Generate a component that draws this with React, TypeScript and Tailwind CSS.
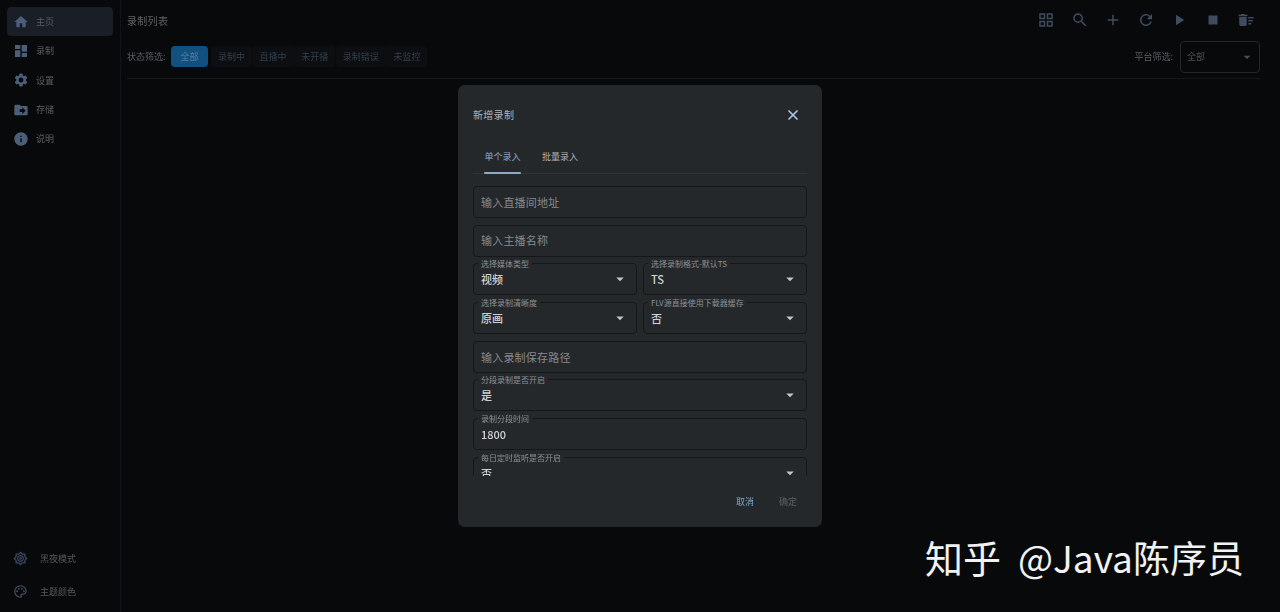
import React from 'react';
import { X } from 'lucide-react';
import {
  MdHome,
  MdDashboard,
  MdSettings,
  MdDriveFileMove,
  MdInfo,
  MdOutlineBrightness7,
  MdOutlinePalette,
  MdOutlineGridView,
  MdSearch,
  MdAdd,
  MdRefresh,
  MdPlayArrow,
  MdStop,
  MdDeleteSweep,
  MdArrowDropDown,
} from 'react-icons/md';

const navItems = [
  { label: '主页', icon: MdHome, active: true },
  { label: '录制', icon: MdDashboard, flip: true },
  { label: '设置', icon: MdSettings },
  { label: '存储', icon: MdDriveFileMove },
  { label: '说明', icon: MdInfo },
];

const filters = ['录制中', '直播中', '未开播', '录制错误', '未监控'];
const toolbar = [MdOutlineGridView, MdSearch, MdAdd, MdRefresh, MdPlayArrow, MdStop, MdDeleteSweep];

const Field: React.FC<{ label?: string; value?: string; placeholder?: string; select?: boolean }> = ({
  label,
  value,
  placeholder,
  select,
}) => {
  return (
    <div className="relative h-8 shrink-0 rounded-[4px] border-[1.5px] border-[#15171a] flex items-center justify-between pl-[7px] pr-2">
      {label && (
        <span className="absolute left-[4px] top-[-5px] bg-[#25282b] px-[3px] text-[8px] leading-[10px] text-[#8d9095] whitespace-nowrap">
          {label}
        </span>
      )}
      {placeholder ? (
        <span className="text-[11px] text-[#85888c] tracking-[0.2px]">{placeholder}</span>
      ) : (
        <span className="text-[11px] font-medium text-[#cfd1d3]">{value}</span>
      )}
      {select && <MdArrowDropDown className="text-[#c4c6c9] ml-auto -mr-[1px]" size={18} />}
    </div>
  );
};

const App: React.FC = () => {
  return (
    <div className="relative h-[612px] w-[1280px] overflow-hidden bg-[#08090b] font-['Noto_Sans_CJK_SC','Noto_Sans',sans-serif]">
      <div className="flex h-full blur-[0.5px]">
        {/* Sidebar */}
        <aside className="w-[121px] shrink-0 border-r border-[#121419] flex flex-col justify-between pt-[7px] pb-[13px] pl-[7px] pr-[7px]">
          <nav className="flex flex-col gap-[0.4px]">
            {navItems.map((item) => (
              <div
                key={item.label}
                className={`h-[29px] rounded-[4px] flex items-center gap-[7px] pl-[6px] ${item.active ? 'bg-[#1a1e27]' : ''}`}
              >
                <item.icon className={`text-[#4c5e79] ${item.flip ? '-scale-y-100' : ''}`} size={16} />
                <span className="text-[9px] text-[#5b5e63]">{item.label}</span>
              </div>
            ))}
          </nav>
          <div className="flex flex-col gap-[18px] pl-[6px]">
            <div className="flex items-center gap-[12px]">
              <MdOutlineBrightness7 className="text-[#3c4a60]" size={15} />
              <span className="text-[9px] text-[#55585c]">黑夜模式</span>
            </div>
            <div className="flex items-center gap-[12px]">
              <MdOutlinePalette className="text-[#3c4a60]" size={15} />
              <span className="text-[9px] text-[#55585c]">主题颜色</span>
            </div>
          </div>
        </aside>

        {/* Main */}
        <main className="flex-1 pl-[6px] pr-[20px]">
          <div className="h-[40px] flex items-center justify-between">
            <h1 className="text-[10px] font-normal text-[#5f6266] tracking-[0.3px]">录制列表</h1>
            <div className="flex items-center gap-[15.3px] pr-[5px]">
              {toolbar.map((Icon, i) => (
                <Icon key={i} className="text-[#3f4c60]" size={18} />
              ))}
            </div>
          </div>
          <div className="h-[39px] flex items-center justify-between border-b border-[#15171b] pb-[6px] pt-[1px]">
            <div className="flex items-center">
              <span className="text-[9px] text-[#5a5d61] w-[44px]">状态筛选:</span>
              <span className="h-[21px] w-[37px] rounded-[4px] bg-[#12507f] text-[9px] text-[#5c7e9b] flex items-center justify-center mr-[3px]">全部</span>
              {filters.map((f) => (
                <span key={f} className="h-[21px] px-[7px] mr-[0.6px] rounded-[4px] bg-[#0c0e11] text-[9px] text-[#343f4c] flex items-center">
                  {f}
                </span>
              ))}
            </div>
            <div className="flex items-center mt-[1px]">
              <span className="text-[9px] text-[#5a5d61] mr-[7px]">平台筛选:</span>
              <div className="h-[32px] w-[80px] rounded-[4px] border border-[#24262a] flex items-center justify-between pl-[6px] pr-[4px]">
                <span className="text-[9px] text-[#4d5054]">全部</span>
                <MdArrowDropDown className="text-[#4d5054]" size={16} />
              </div>
            </div>
          </div>
        </main>
      </div>

      {/* Dialog */}
      <div className="absolute left-[458px] top-[85px] h-[442px] w-[364px] rounded-[7px] bg-[#25282b] flex flex-col px-[15px] blur-[0.5px]">
        <div className="h-[60px] shrink-0 flex items-center justify-between pb-[1px]">
          <h2 className="text-[10px] font-normal text-[#b0b2b5] tracking-[0.3px]">新增录制</h2>
          <X className="text-[#a9c5e6] mr-[6px]" size={16} strokeWidth={2.6} />
        </div>
        <div className="h-[29px] shrink-0 border-b border-[#303338] flex pl-[11px]">
          <div className="relative w-[37px] text-center">
            <span className="text-[9px] text-[#8fa9cc] whitespace-nowrap leading-[24px] block">单个录入</span>
            <span className="absolute left-0 right-0 bottom-[-1px] h-[2px] rounded-sm bg-[#8fa9cc]"></span>
          </div>
          <span className="ml-[21px] text-[9px] text-[#b0b2b5] leading-[24px]">批量录入</span>
        </div>
        <div className="mt-[12px] h-[290px] shrink-0 overflow-hidden flex flex-col gap-[6.7px]">
          <Field placeholder="输入直播间地址" />
          <Field placeholder="输入主播名称" />
          <div className="grid grid-cols-2 gap-[6px] shrink-0">
            <Field label="选择媒体类型" value="视频" select />
            <Field label="选择录制格式-默认TS" value="TS" select />
          </div>
          <div className="grid grid-cols-2 gap-[6px] shrink-0">
            <Field label="选择录制清晰度" value="原画" select />
            <Field label="FLV源直接使用下载器缓存" value="否" select />
          </div>
          <Field placeholder="输入录制保存路径" />
          <Field label="分段录制是否开启" value="是" select />
          <Field label="录制分段时间" value="1800" />
          <Field label="每日定时监听是否开启" value="否" select />
        </div>
        <div className="flex-1 flex items-center justify-end gap-[25px] pr-[10px]">
          <span className="text-[9px] text-[#7fa3cc]">取消</span>
          <span className="text-[9px] text-[#5d6064]">确定</span>
        </div>
      </div>

      {/* Watermark */}
      <div className="absolute left-[925px] top-[530px] flex items-center leading-[54px] font-normal text-[#f2f2f2]">
        <span className="w-[93px] text-[38px]">知乎</span>
        <span className="whitespace-nowrap text-[37px]">@Java陈序员</span>
      </div>
    </div>
  );
};

export default App;
